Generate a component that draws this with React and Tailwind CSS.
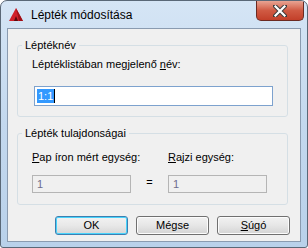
import React from 'react';

// AutoCAD-style title icon
function AppIcon() {
  return (
    <svg width="14" height="13" viewBox="0 0 14 13" className="shrink-0">
      <path d="M7 0 L14 13 L0 13 Z" fill="#d0202a" />
      <path d="M7 0 L14 13 L10 13 Z" fill="#9e1018" />
      <path d="M7 8 L9 13 L5 13 Z" fill="#5a0a0e" />
    </svg>
  );
}

function CloseButton() {
  return (
    <div className="self-start mr-[3px] w-[48px] h-[20px] rounded-b-[5px] border border-t-0 border-[#6b2a22] bg-gradient-to-b from-[#e8a493] via-[#d05a43] to-[#c23f29] flex items-center justify-center">
      <svg width="14" height="12" viewBox="0 0 14 12">
        <path d="M2 1 L12 11 M12 1 L2 11" stroke="#3c3c3c" strokeWidth="4.2" strokeLinecap="square" />
        <path d="M2.5 1.5 L11.5 10.5 M11.5 1.5 L2.5 10.5" stroke="#ffffff" strokeWidth="2.2" strokeLinecap="square" />
      </svg>
    </div>
  );
}

function Button({ children, primary }) {
  return (
    <button
      className={
        primary
          ? 'w-[73px] h-[19px] rounded-[3px] border border-[#3c7fb1] bg-gradient-to-b from-[#f2f2f2] via-[#e8e8e8] to-[#d6d6d6] text-[11px] leading-none text-black shadow-[inset_0_0_0_1px_#48d3fb]'
          : 'w-[73px] h-[19px] rounded-[3px] border border-[#707070] bg-gradient-to-b from-[#f2f2f2] via-[#e6e6e6] to-[#d4d4d4] text-[11px] leading-none text-black shadow-[inset_0_0_0_1px_#fcfcfc]'
      }
    >
      {children}
    </button>
  );
}

export default function App() {
  return (
    <div className="w-[308px] h-[248px] flex flex-col rounded-t-[7px] rounded-b-[3px] border border-[#5a6877] bg-gradient-to-b from-[#d5e5f5] via-[#c3d8ee] to-[#b9d1ea] font-['Liberation_Sans',Arial,sans-serif] text-black overflow-hidden">
      {/* Title bar */}
      <div className="h-[27px] flex items-center">
        <div className="ml-[8px] flex items-center gap-[8px]">
          <AppIcon />
          <span className="text-[12px] text-black">Lépték módosítása</span>
        </div>
        <div className="ml-auto self-start">
          <CloseButton />
        </div>
      </div>

      {/* Client area */}
      <div className="flex-1 mx-[6px] mb-[5px] border border-[#8a9bb0] bg-[#f0f0f0] flex flex-col pl-[9px] pr-[12px] text-[11px]">
        <fieldset className="mt-[10px] h-[78px] border border-[#d5dfe5] rounded-[3px] px-[14px]">
          <legend className="ml-[-10px] px-[3px] leading-[13px]">Léptéknév</legend>
          <div className="mt-[6px] leading-[13px] whitespace-nowrap">
            Léptéklistában megjelenő <span className="underline">n</span>év:
          </div>
          <div className="mt-[15px] ml-[2px] w-[239px] h-[20px] border border-[#7da2ce] bg-white flex items-center pl-[2px]">
            <span className="bg-[#3399ff] text-white px-[1px] leading-[14px]">1:1</span>
            <span className="w-[1px] h-[14px] bg-black" />
          </div>
        </fieldset>

        <fieldset className="mt-[10px] h-[78px] border border-[#d5dfe5] rounded-[3px] px-[14px]">
          <legend className="ml-[-10px] px-[3px] leading-[13px]">Lépték tulajdonságai</legend>
          <div className="mt-[11px] flex">
            <div className="w-[99px] flex flex-col">
              <div className="leading-[13px] whitespace-nowrap">
                <span className="underline">P</span>ap íron mért egység:
              </div>
              <div className="mt-[11px] w-[99px] h-[18px] border border-[#b5b5b5] bg-[#f0f0f0] flex items-center pl-[4px] text-[#6d6d8d]">1</div>
            </div>
            <div className="w-[37px] flex items-end justify-center pb-[3px]">=</div>
            <div className="w-[99px] flex flex-col">
              <div className="leading-[13px] whitespace-nowrap">
                <span className="underline">R</span>ajzi egység:
              </div>
              <div className="mt-[11px] w-[99px] h-[18px] border border-[#b5b5b5] bg-[#f0f0f0] flex items-center pl-[4px] text-[#6d6d8d]">1</div>
            </div>
          </div>
        </fieldset>

        <div className="mt-[11px] flex justify-end gap-[8px] mr-[-2px]">
          <Button primary>OK</Button>
          <Button>Mégse</Button>
          <Button>
            <span className="underline">S</span>úgó
          </Button>
        </div>
      </div>
    </div>
  );
}
